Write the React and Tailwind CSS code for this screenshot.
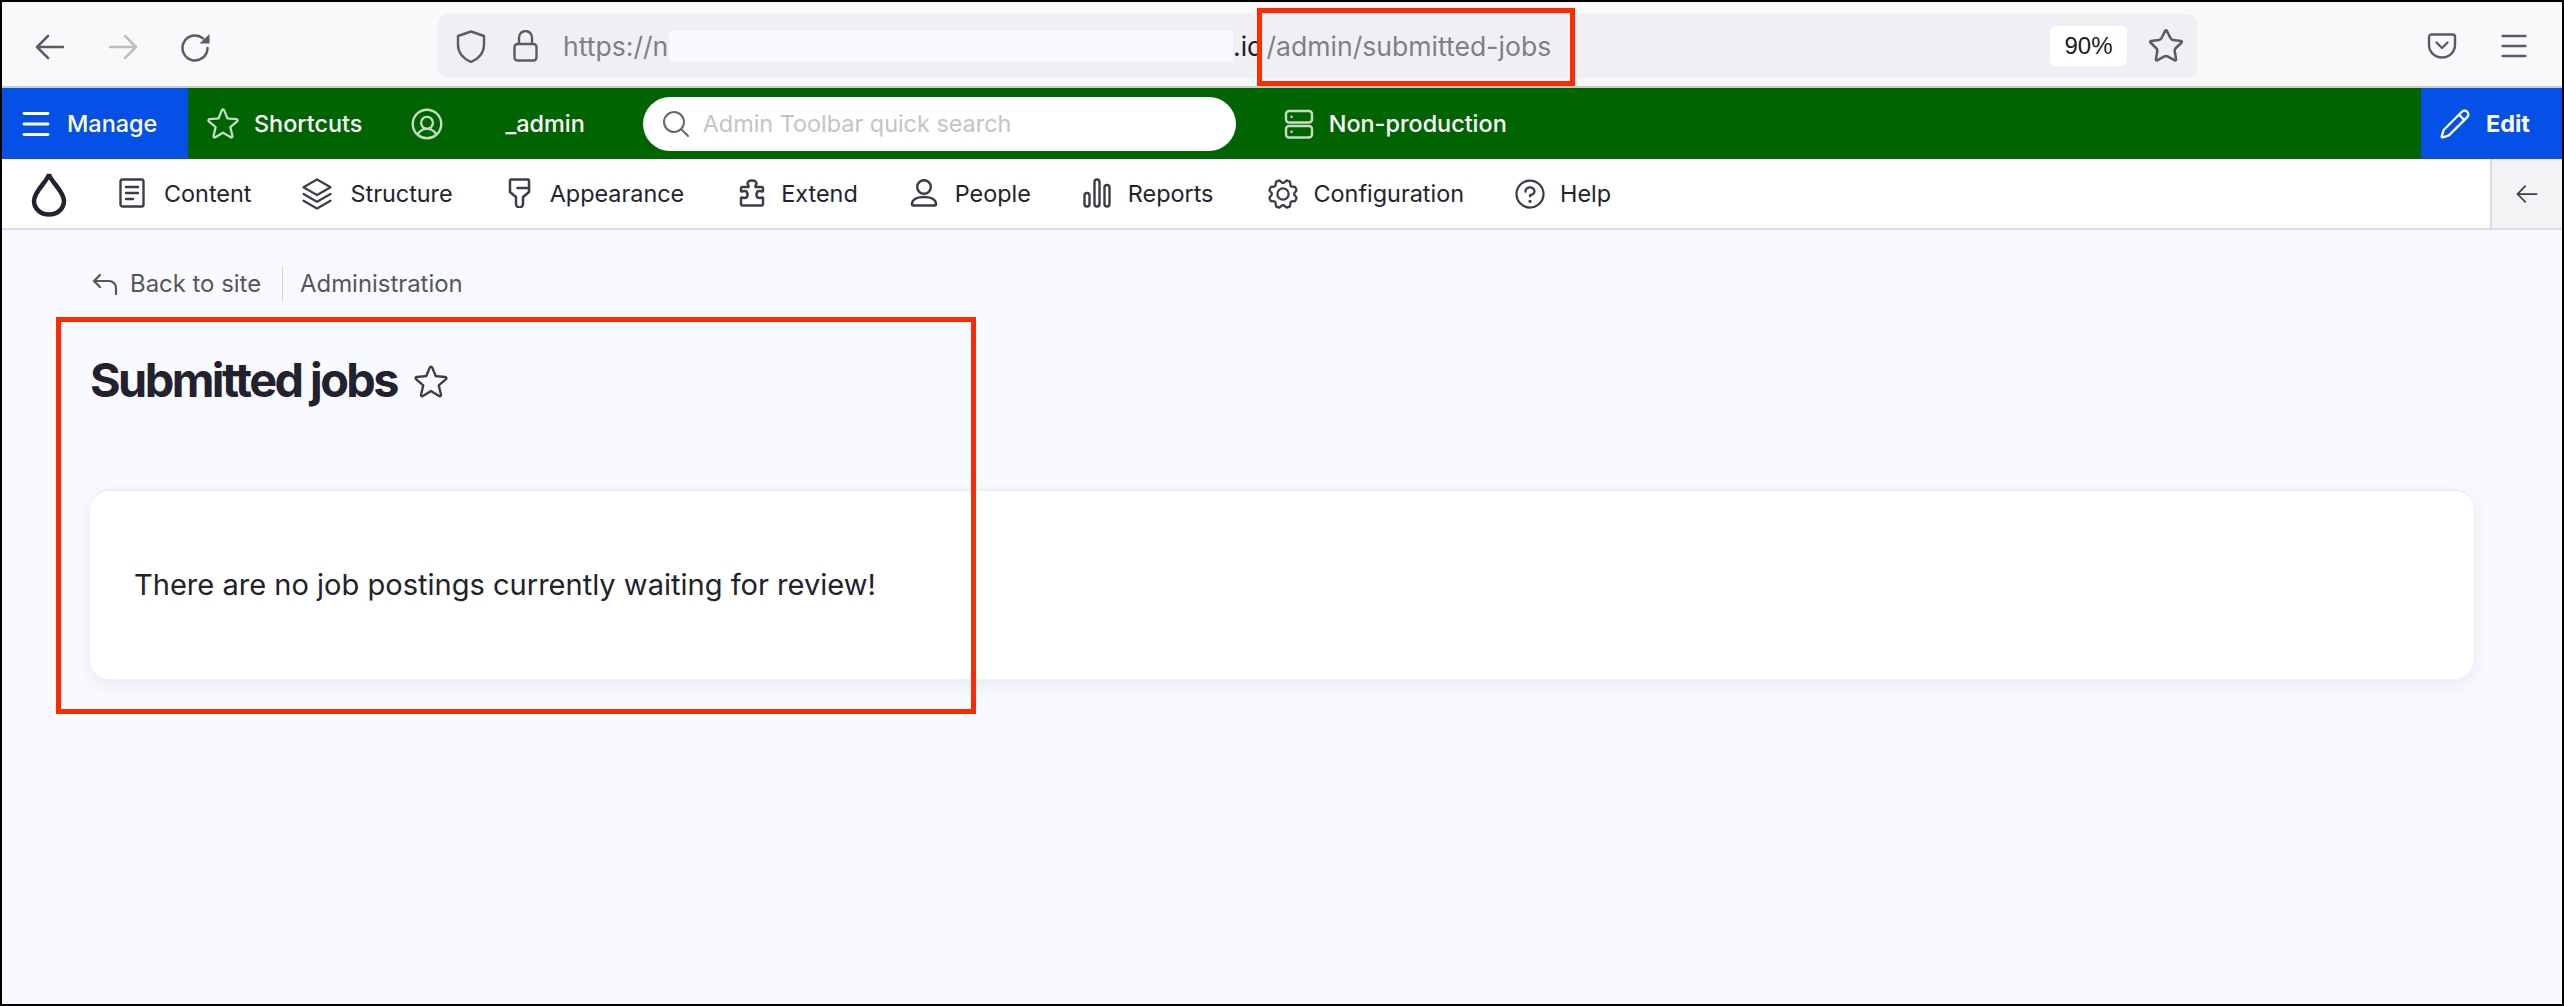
import React from "react";
import { Star, Menu, Pencil } from "lucide-react";
import { PiStack, PiGear, PiQuestion, PiStar, PiUserCircle, PiMagnifyingGlass, PiArrowLeft } from "react-icons/pi";

const Drop = () => (
  <svg width="36" height="46" viewBox="0 0 36 46" fill="none" stroke="#23232f" strokeWidth="4.5" className="shrink-0">
    <path d="M18 3 C19 10 33 20 33 30 C33 38 26 43.5 18 43.5 C10 43.5 3 38 3 30 C3 20 17 10 18 3 Z" />
  </svg>
);
const Doc = () => (
  <svg width="26" height="30" viewBox="0 0 26 30" fill="none" stroke="#3d3d47" strokeWidth="2.4" strokeLinecap="round" strokeLinejoin="round" className="shrink-0">
    <rect x="1.5" y="1.5" width="23" height="27" rx="2" />
    <path d="M7 9h12M7 15h12M7 21h7" />
  </svg>
);
const Brush = () => (
  <svg width="23" height="30" viewBox="0 0 23 30" fill="none" stroke="#3d3d47" strokeWidth="2.5" strokeLinecap="round" strokeLinejoin="round" className="shrink-0">
    <path d="M3 1.500h17a1 1 0 0 1 1 1v11.500l-6 5v7a3.500 3.500 0 0 1-7 0v-7l-6-5V2.500a1 1 0 0 1 1-1z" />
    <path d="M9.500 10h11.500" />
  </svg>
);
const PuzzleIcon = () => (
  <svg width="26" height="28" viewBox="0 0 26 28" fill="none" stroke="#3d3d47" strokeWidth="2.5" strokeLinejoin="round" className="shrink-0">
    <path d="M3.500 8H9C10 8 9.500 6.500 9 6C7.500 3 10 1.500 13 1.500C16 1.500 18.500 3 17 6C16.500 6.500 16 8 17 8H22.500A1.500 1.500 0 0 1 24 9.500V12C24 13 22 12 20.500 12C18 12 17.500 14 17.500 15.500C17.500 17 18 19 20.500 19C22 19 24 18 24 19V25A1.500 1.500 0 0 1 22.500 26.500H3.500A1.500 1.500 0 0 1 2 25V19C2 18 4 19 5.500 19C8 19 8.500 17 8.500 15.500C8.500 14 8 12 5.500 12C4 12 2 13 2 12V9.500A1.500 1.500 0 0 1 3.500 8Z" />
  </svg>
);
const PersonIcon = () => (
  <svg width="28" height="28" viewBox="0 0 28 28" fill="none" stroke="#3d3d47" strokeWidth="2.5" strokeLinejoin="round" className="shrink-0">
    <circle cx="14" cy="8" r="6.800" />
    <path d="M2 25C2 20 8 18 14 18C20 18 26 20 26 25C26 25.800 25.500 26.500 25 26.500H3C2.500 26.500 2 25.800 2 25Z" />
  </svg>
);
const Bars = () => (
  <svg width="28" height="30" viewBox="0 0 28 30" fill="none" stroke="#3d3d47" strokeWidth="2.4" className="shrink-0">
    <rect x="1.500" y="15" width="5" height="13.500" rx="2.500" />
    <rect x="11.500" y="1.500" width="5" height="27" rx="2.500" />
    <rect x="21.500" y="7" width="5" height="21.500" rx="2.500" />
  </svg>
);
const BackArrow = ({ color }) => (
  <svg width="30" height="26" viewBox="0 0 30 26" fill="none" stroke={color} strokeWidth="2.5" strokeLinecap="round" strokeLinejoin="round" className="shrink-0">
    <path d="M28 13H2.500M13 2 2 13l11 11" />
  </svg>
);
const ForwardArrow = ({ color }) => (
  <svg width="30" height="26" viewBox="0 0 30 26" fill="none" stroke={color} strokeWidth="2.500" strokeLinecap="round" strokeLinejoin="round" className="shrink-0">
    <path d="M2 13h25.500M17 2l11 11-11 11" />
  </svg>
);
const Reload = () => (
  <svg width="29" height="29" viewBox="0 0 29 29" fill="none" className="shrink-0">
    <path d="M26.500 15A12.500 12.500 0 1 1 22 5.400" stroke="#5b5b66" strokeWidth="2.500" strokeLinecap="round" />
    <path d="M28.500 1V10.500H18.500z" fill="#5b5b66" />
  </svg>
);
const ShieldIcon = () => (
  <svg width="30" height="33" viewBox="0 0 30 33" fill="none" stroke="#5b5b66" strokeWidth="2.400" strokeLinejoin="round" className="shrink-0">
    <path d="M15 1.500 28 6v9c0 8-6 14-13 17C8 29 2 23 2 15V6z" />
  </svg>
);
const LockIcon = () => (
  <svg width="25" height="32" viewBox="0 0 25 32" fill="none" stroke="#5b5b66" strokeWidth="2.400" className="shrink-0">
    <path d="M6 14V7.500a6.500 6.500 0 0 1 13 0V14" />
    <rect x="1.500" y="14" width="22" height="16.500" rx="3" />
  </svg>
);
const Pocket = () => (
  <svg width="30" height="26" viewBox="0 0 30 26" fill="none" stroke="#5b5b66" strokeWidth="2.400" strokeLinecap="round" strokeLinejoin="round" className="shrink-0">
    <path d="M2 4a2.500 2.500 0 0 1 2.500-2.500h21A2.500 2.500 0 0 1 28 4v8c0 7-6 12.500-13 12.500S2 19 2 12z" />
    <path d="M9.500 9.500 15 15l5.500-5.500" />
  </svg>
);
const ServerIcon = () => (
  <svg width="30" height="30" viewBox="0 0 30 30" fill="none" stroke="#c6dcc6" strokeWidth="2.400" strokeLinecap="round" className="shrink-0">
    <rect x="2" y="2" width="26" height="11.500" rx="3" />
    <rect x="2" y="17" width="26" height="11.500" rx="3" />
    <path d="M7.500 7.800h.1M7.500 22.800h.1" />
  </svg>
);
const ReplyIcon = () => (
  <svg width="26" height="22" viewBox="0 0 26 22" fill="none" stroke="#55565b" strokeWidth="2.200" strokeLinecap="round" strokeLinejoin="round" className="shrink-0">
    <path d="M8 2 2 8l6 6M2 8h15a7 7 0 0 1 7 7v6" />
  </svg>
);

const navItems = [
  { label: "Content", icon: <Doc />, cls: "ml-[52px] gap-[19px]" },
  { label: "Structure", icon: <PiStack size={36} color="#3d3d47" className="shrink-0" />, cls: "ml-[48px] gap-[15px]" },
  { label: "Appearance", icon: <Brush />, cls: "ml-[55px] gap-[19px]" },
  { label: "Extend", icon: <PuzzleIcon />, cls: "ml-[55px] gap-[16px]" },
  { label: "People", icon: <PersonIcon />, cls: "ml-[52px] gap-[17px]" },
  { label: "Reports", icon: <Bars />, cls: "ml-[52px] gap-[17px]" },
  { label: "Configuration", icon: <PiGear size={36} color="#3d3d47" className="shrink-0" />, cls: "ml-[52px] gap-[12px]" },
  { label: "Help", icon: <PiQuestion size={36} color="#3d3d47" className="shrink-0" />, cls: "ml-[48px] gap-[12px]" },
];

export default function App() {
  return (
    <div className="relative box-border w-[2564px] h-[1006px] border-2 border-black bg-[#f9faff] overflow-hidden flex flex-col font-['Inter',sans-serif]">
      {/* Browser chrome */}
      <div className="h-[86px] shrink-0 box-border border-b-2 border-[#cccccc] bg-[#f9f9fb] flex items-center pl-[33px] pr-[31px] pt-[4px]">
        <div className="mt-[2px]"><BackArrow color="#5b5b66" /></div>
        <div className="ml-[43px] mt-[2px]"><ForwardArrow color="#bdbdc2" /></div>
        <div className="ml-[43px] mt-[2px]"><Reload /></div>
        <div className="ml-[228px] w-[1759px] h-[64px] shrink-0 rounded-[10px] bg-[#f0f0f4] flex items-center pl-[18px] pr-[12px] text-[26.6px]">
          <ShieldIcon />
          <div className="ml-[27px]"><LockIcon /></div>
          <span className="ml-[25px] mt-[2px] text-[#7f7f87] w-[106px] overflow-hidden whitespace-nowrap shrink-0">https://n</span>
          <div className="w-[564px] h-[30px] bg-[#f9fafe] shrink-0"></div>
          <span className="mt-[2px] text-[#1c1b22] whitespace-nowrap shrink-0">.id</span>
          <span className="mt-[2px] text-[#7f7f87] whitespace-nowrap ml-[3px]">/admin/submitted-jobs</span>
          <div className="ml-auto flex items-center gap-[20px]">
            <div className="w-[77px] h-[40px] rounded-[6px] bg-white flex items-center justify-center font-['Liberation_Sans',sans-serif] text-[24px] text-[#1c1b22]">90%</div>
            <Star size={38} strokeWidth={1.6} color="#5b5b66" className="shrink-0" />
          </div>
        </div>
        <div className="ml-auto flex items-center gap-[40px]">
          <Pocket />
          <Menu size={34} strokeWidth={1.8} color="#5b5b66" className="shrink-0" />
        </div>
      </div>

      {/* Admin toolbar */}
      <div className="h-[71px] shrink-0 bg-[#006400] flex items-center text-white text-[23.4px]">
        <div className="w-[186px] h-full bg-[#0550e6] flex items-center pl-[16px] gap-[13px] font-medium">
          <Menu size={36} strokeWidth={1.9} color="#ffffff" className="shrink-0" />
          <span>Manage</span>
        </div>
        <PiStar size={36} color="#c6dcc6" className="ml-[17px] shrink-0" />
        <span className="ml-[13px] font-medium">Shortcuts</span>
        <PiUserCircle size={38} color="#c6dcc6" className="ml-[46px] shrink-0" />
        <span className="ml-[59px] font-medium">_admin</span>
        <div className="ml-[58px] w-[593px] h-[54px] rounded-full bg-white flex items-center pl-[17px] gap-[11px] text-[#c4c4c4]">
          <PiMagnifyingGlass size={32} color="#66666e" className="shrink-0" />
          <span>Admin Toolbar quick search</span>
        </div>
        <div className="ml-[48px]"><ServerIcon /></div>
        <span className="ml-[15px] font-medium">Non-production</span>
        <div className="ml-auto w-[141px] h-full bg-[#0550e6] flex items-center pl-[18px] gap-[15px] font-bold">
          <Pencil size={32} strokeWidth={1.7} color="#ffffff" className="shrink-0" />
          <span>Edit</span>
        </div>
      </div>

      {/* Admin nav */}
      <div className="h-[71px] shrink-0 box-border border-b-2 border-[#dcdce0] bg-white flex items-center text-[23.4px] text-[#23232f]">
        <div className="ml-[29px]"><Drop /></div>
        {navItems.map((n) => (
          <div key={n.label} className={`flex items-center ${n.cls}`}>
            {n.icon}
            <span>{n.label}</span>
          </div>
        ))}
        <div className="ml-auto w-[72px] h-full box-border border-l-2 border-[#dcdce0] bg-[#f3f3f5] flex items-center justify-center">
          <PiArrowLeft size={28} color="#3d3d47" />
        </div>
      </div>

      {/* Page */}
      <div className="flex-1 px-[88px]">
        <div className="pt-[19px] flex items-center text-[23.9px] text-[#55565b] h-[70px] box-content">
          <div className="ml-[2px]"><ReplyIcon /></div>
          <span className="ml-[12px]">Back to site</span>
          <div className="ml-[21px] w-[1px] h-[36px] bg-[#d4d4d8]"></div>
          <span className="ml-[17px]">Administration</span>
        </div>
        <div className="mt-[28px] flex items-center h-[66px]">
          <h1 className="text-[46.8px] font-bold tracking-[-0.054em] text-[#22222f] leading-none">Submitted jobs</h1>
          <PiStar size={38} color="#3d3d47" className="ml-[15px] mt-[4px] shrink-0" />
        </div>
        <div className="mt-[76px] h-[190px] box-border rounded-[20px] bg-white border-t-2 border-[#ececf0] shadow-[0_6px_18px_rgba(40,50,100,0.08)] flex items-center pl-[44px] text-[29.05px] text-[#22222f]">
          There are no job postings currently waiting for review!
        </div>
      </div>

      {/* Annotation boxes */}
      <div className="absolute left-[1255px] top-[6px] w-[318px] h-[78px] box-border border-[5px] border-[#ff2a00]"></div>
      <div className="absolute left-[54px] top-[315px] w-[920px] h-[397px] box-border border-[5px] border-[#ff2a00]"></div>
    </div>
  );
}
